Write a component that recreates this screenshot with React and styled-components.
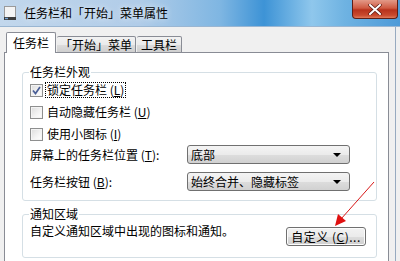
import React from 'react'
import styled, { createGlobalStyle } from 'styled-components'

const Global = createGlobalStyle`
    html, body {
        margin: 0;
        padding: 0;
        background: #f0f0f0;
    }
    body {
        font-family: "Noto Sans CJK SC", "Noto Sans", sans-serif;
        font-size: 12px;
        color: #000;
    }
`

const Window = styled.div`
    position: relative;
    width: 400px;
    height: 261px;
    overflow: hidden;
    background: #f0f0f0;
    display: flex;
    flex-direction: column;
`

const TitleBar = styled.div`
    height: 26px;
    flex: none;
    display: flex;
    align-items: center;
    background: linear-gradient(to right, #c2d7ec 0%, #b0cce8 35%, #7fb6e2 55%, #3d93d6 66%, #8fc7ec 78%, #6fb3e2 86%, #4d9ad8 100%);
    border-bottom: 1px solid #9ab6d2;
    padding-left: 3px;
`

const Title = styled.span`
    margin-left: 7px;
    font-size: 12px;
    line-height: 14px;
    color: #000;
    text-shadow: 0 0 6px rgba(255, 255, 255, 0.9);
`

const CloseButton = styled.div`
    margin-left: auto;
    align-self: flex-start;
    width: 44px;
    height: 18px;
    margin-right: 2px;
    border: 1px solid #5e1f17;
    border-top: none;
    border-radius: 0 0 4px 4px;
    background: linear-gradient(to bottom, #e39a88 0%, #cf5a42 45%, #b8321c 55%, #c94a2e 85%, #e07a5a 100%);
    display: flex;
    align-items: center;
    justify-content: center;
`

const Body = styled.div`
    flex: 1;
    display: flex;
    flex-direction: column;
    padding: 5px 0 0 4px;
    border-right: 1px solid #97aac0;
    margin-right: 4px;
    min-height: 0;
`

const TabRow = styled.div`
    display: flex;
    align-items: flex-end;
    padding-left: 2px;
    height: 21px;
    position: relative;
    z-index: 1;
    margin-bottom: -1px;
`

const Tab = styled.div`
    height: ${p => (p.$active ? '21px' : '17px')};
    padding: 0 ${p => p.$pad}px;
    margin: 0 ${p => (p.$active ? '0' : '0 0 1px')};
    box-sizing: border-box;
    display: flex;
    align-items: center;
    border: 1px solid #898c95;
    border-bottom: ${p => (p.$active ? 'none' : '1px solid #898c95')};
    border-left: ${p => (p.$first || p.$active ? '1px solid #898c95' : 'none')};
    border-radius: 2px 2px 0 0;
    background: ${p => (p.$active ? '#fff' : 'linear-gradient(to bottom, #f2f2f2 0%, #ebebeb 50%, #dddddd 51%, #cfcfcf 100%)')};
    font-size: 12px;
    line-height: 14px;
    white-space: nowrap;
`

const Panel = styled.div`
    flex: 1;
    width: 385px;
    box-sizing: border-box;
    background: #fff;
    border: 1px solid #898c95;
    border-bottom: none;
    padding: 12px 11px 0 17px;
    display: flex;
    flex-direction: column;
    gap: 6px;
`

const Group = styled.fieldset`
    margin: 0;
    border: 1px solid #d5dfe5;
    border-radius: 3px;
    padding: 0 10px ${p => p.$bottom}px 7px;
    min-width: 0;
`

const Legend = styled.legend`
    padding: 0 1px;
    margin-left: -1px;
    font-size: 12px;
    line-height: 14px;
`

const CheckRow = styled.label`
    height: 22px;
    display: flex;
    align-items: center;
    gap: 2px;
    line-height: 14px;
`

const Box = styled.span`
    width: 11px;
    height: 11px;
    border: 1px solid #8e8f8f;
    background: linear-gradient(135deg, #dcdcdc 0%, #f4f4f4 60%, #ffffff 100%);
    box-shadow: inset 0 0 0 1px #f4f4f4;
    display: flex;
    align-items: center;
    justify-content: center;
    flex: none;
`

const CheckText = styled.span`
    padding: 0 1px;
    border: 1px dotted ${p => (p.$focus ? '#000' : 'transparent')};
`

const ComboRow = styled.div`
    display: flex;
    align-items: center;
    height: 19px;
    margin-top: ${p => p.$gap}px;
`

const ComboLabel = styled.span`
    width: 157px;
    flex: none;
    line-height: 14px;
`

const Combo = styled.div`
    width: 163px;
    height: 19px;
    box-sizing: border-box;
    border: 1px solid #707070;
    border-radius: 3px;
    background: linear-gradient(to bottom, #f4f4f4 0%, #ebebeb 50%, #dddddd 51%, #d1d1d1 100%);
    display: flex;
    align-items: center;
    padding: 0 8px 0 3px;
    justify-content: space-between;
    line-height: 14px;
`

const Arrow = styled.span`
    width: 0;
    height: 0;
    border-left: 4px solid transparent;
    border-right: 4px solid transparent;
    border-top: 4px solid #000;
`

const NotifyRow = styled.div`
    display: flex;
    justify-content: space-between;
    align-items: flex-start;
    padding-top: 3px;
`

const NotifyText = styled.span`
    line-height: 14px;
`

const Button = styled.div`
    margin-top: 3px;
    width: 80px;
    height: 19px;
    box-sizing: border-box;
    border: 1px solid #707070;
    border-radius: 3px;
    background: linear-gradient(to bottom, #f2f2f2 0%, #ebebeb 50%, #dddddd 51%, #cfcfcf 100%);
    box-shadow: inset 0 0 0 1px #fcfcfc;
    display: flex;
    align-items: center;
    justify-content: center;
    line-height: 14px;
    letter-spacing: 0.5px;
`

const Overlay = styled.svg`
    position: absolute;
    left: 0;
    top: 0;
    pointer-events: none;
`

const Check = () => (
    <svg width="9" height="9" viewBox="0 0 9 9">
        <path d="M1 4.5 L3.5 7.5 L8 1" fill="none" stroke="#4a5f97" strokeWidth="1.7" />
    </svg>
)

const WinIcon = () => (
    <svg width="14" height="16" viewBox="0 0 14 16">
        <rect x="1.5" y="1.5" width="11" height="11" fill="#f4f4f4" stroke="#9a9a9a" />
        <rect x="1" y="12" width="12" height="3" fill="#3c3c3c" />
        <rect x="2" y="12.8" width="3" height="1.4" fill="#7aa8d8" />
    </svg>
)

const App = () => (
    <>
        <Global />
        <Window>
            <TitleBar>
                <WinIcon />
                <Title>任务栏和「开始」菜单属性</Title>
                <CloseButton>
                    <svg width="14" height="11" viewBox="0 0 14 11">
                        <path d="M2 1 L12 10 M12 1 L2 10" stroke="#5a1a12" strokeWidth="3.4" strokeLinecap="round" />
                        <path d="M2 1 L12 10 M12 1 L2 10" stroke="#fff" strokeWidth="2" strokeLinecap="round" />
                    </svg>
                </CloseButton>
            </TitleBar>
            <Body>
                <TabRow>
                    <Tab $active $first $pad={6}>任务栏</Tab>
                    <Tab $pad={3}>「开始」菜单</Tab>
                    <Tab $pad={4}>工具栏</Tab>
                </TabRow>
                <Panel>
                    <Group $bottom={9}>
                        <Legend>任务栏外观</Legend>
                        <CheckRow>
                            <Box><Check /></Box>
                            <CheckText $focus>锁定任务栏 (<u>L</u>)</CheckText>
                        </CheckRow>
                        <CheckRow>
                            <Box />
                            <CheckText>自动隐藏任务栏 (<u>U</u>)</CheckText>
                        </CheckRow>
                        <CheckRow>
                            <Box />
                            <CheckText>使用小图标 (<u>I</u>)</CheckText>
                        </CheckRow>
                        <ComboRow $gap={0}>
                            <ComboLabel>屏幕上的任务栏位置 (<u>T</u>):</ComboLabel>
                            <Combo>底部<Arrow /></Combo>
                        </ComboRow>
                        <ComboRow $gap={8}>
                            <ComboLabel>任务栏按钮 (<u>B</u>):</ComboLabel>
                            <Combo>始终合并、隐藏标签<Arrow /></Combo>
                        </ComboRow>
                    </Group>
                    <Group $bottom={11}>
                        <Legend>通知区域</Legend>
                        <NotifyRow>
                            <NotifyText>自定义通知区域中出现的图标和通知。</NotifyText>
                            <Button>自定义 (<u>C</u>)...</Button>
                        </NotifyRow>
                    </Group>
                </Panel>
            </Body>
            <Overlay width="400" height="261" viewBox="0 0 400 261">
                <line x1="374" y1="182" x2="341" y2="219" stroke="#d81818" strokeWidth="1" />
                <polygon points="335,226 338,214 346,221" fill="#e01010" />
            </Overlay>
        </Window>
    </>
)

export default App
